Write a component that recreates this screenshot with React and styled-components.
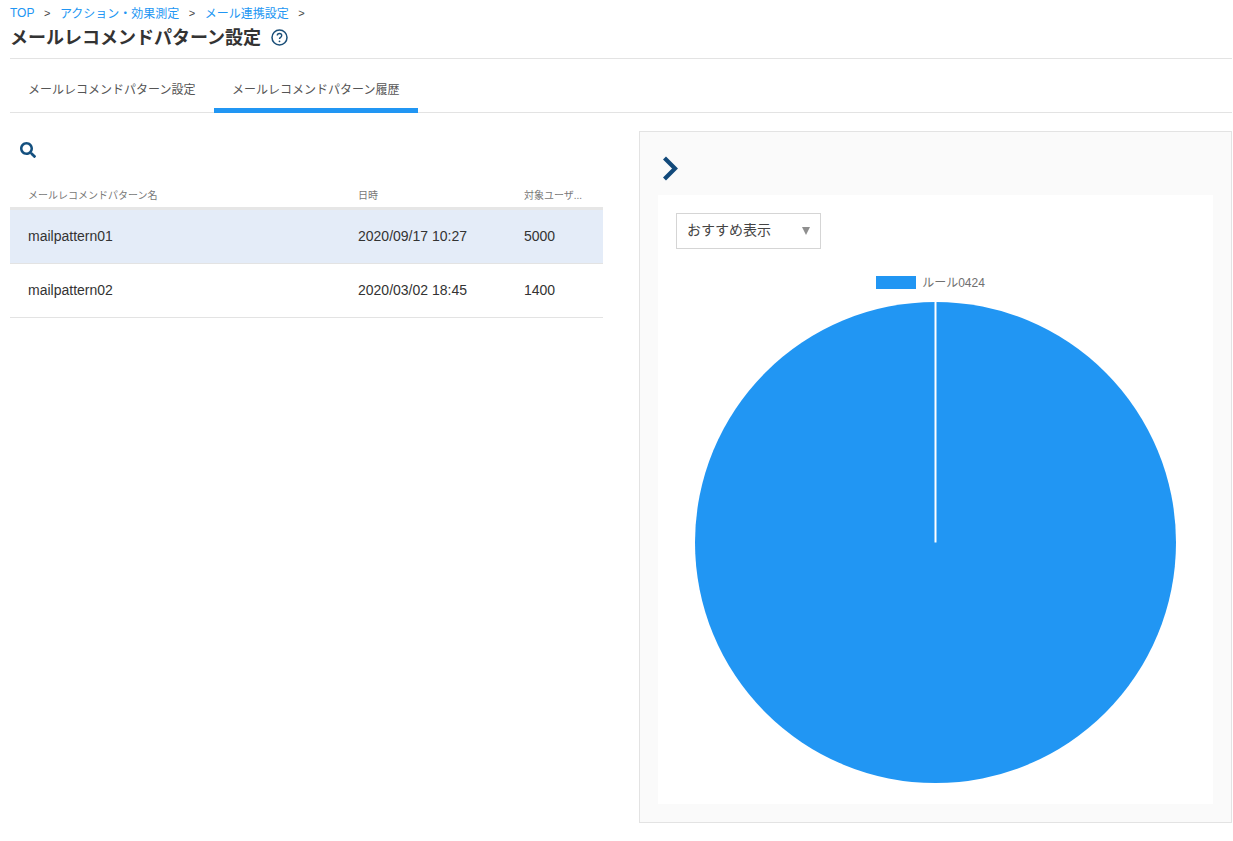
import styled, { createGlobalStyle } from 'styled-components';
import { FaSearch } from 'react-icons/fa';

const rows = [
  { name: 'mailpattern01', date: '2020/09/17 10:27', users: 5000, selected: true },
  { name: 'mailpattern02', date: '2020/03/02 18:45', users: 1400 },
];

const App = () => (
  <>
    <GlobalStyle />
    <Page>
      <Breadcrumb>
        <Crumb>TOP</Crumb>
        <Sep>&gt;</Sep>
        <Crumb>アクション・効果測定</Crumb>
        <Sep>&gt;</Sep>
        <Crumb>メール連携設定</Crumb>
        <Sep>&gt;</Sep>
      </Breadcrumb>
      <TitleRow>
        <Title>メールレコメンドパターン設定</Title>
        <svg width="17" height="17" viewBox="0 0 17 17" fill="none">
          <circle cx="8.5" cy="8.5" r="7.5" stroke="#1b4f78" strokeWidth="1.5" />
          <path d="M6.3 6.6c0-1.3 1-2.1 2.2-2.1s2.2.8 2.2 2c0 1.9-2.2 1.8-2.2 3.6" stroke="#1b4f78" strokeWidth="1.4" />
          <circle cx="8.5" cy="12.3" r="0.9" fill="#1b4f78" />
        </svg>
      </TitleRow>
      <Tabs>
        <Tab>メールレコメンドパターン設定</Tab>
        <Tab $active>メールレコメンドパターン履歴</Tab>
      </Tabs>
      <Content>
        <ListPane>
          <SearchButton>
            <FaSearch size={16} color="#14507f" />
          </SearchButton>
          <HeadRow>
            <NameCell>メールレコメンドパターン名</NameCell>
            <DateCell>日時</DateCell>
            <UsersCell>対象ユーザ...</UsersCell>
          </HeadRow>
          {rows.map((row) => (
            <Row key={row.name} $selected={row.selected}>
              <NameCell>{row.name}</NameCell>
              <DateCell>{row.date}</DateCell>
              <UsersCell>{row.users}</UsersCell>
            </Row>
          ))}
        </ListPane>
        <DetailPane>
          <Collapse>
            <svg width="17" height="25" viewBox="0 0 17 25" fill="none">
              <path d="M2.5 2l10.5 10.5-10.5 10.5" stroke="#12497a" strokeWidth="4.2" />
            </svg>
          </Collapse>
          <ChartCard>
            <Select>
              <SelectLabel>おすすめ表示</SelectLabel>
              <Caret />
            </Select>
            <Legend>
              <Swatch />
              <LegendLabel>ルール0424</LegendLabel>
            </Legend>
            <PieWrap>
              <svg width="481" height="481" viewBox="0 0 481 481">
                <circle cx="240.5" cy="240.5" r="240.5" fill="#2196f3" />
                <line x1="240.5" y1="0" x2="240.5" y2="240.5" stroke="#fff" strokeWidth="2" />
              </svg>
            </PieWrap>
          </ChartCard>
        </DetailPane>
      </Content>
    </Page>
  </>
);

export default App;

const GlobalStyle = createGlobalStyle`
  html, body {
    margin: 0;
    background: #fff;
    font-family: "Liberation Sans", "Noto Sans CJK JP", sans-serif;
    color: #333;
  }
`;

const Page = styled.div`
  width: 1233px;
  height: 841px;
  box-sizing: border-box;
  padding: 5px 1px 0 10px;
  overflow: hidden;
`;

const Breadcrumb = styled.div`
  display: flex;
  align-items: center;
  height: 15px;
  font-size: 12px;
`;

const Crumb = styled.span`
  color: #2196f3;
`;

const Sep = styled.span`
  color: #444;
  font-size: 11px;
  margin: 0 9.5px;
`;

const TitleRow = styled.div`
  display: flex;
  align-items: center;
  gap: 10px;
  height: 34px;
  padding-bottom: 4px;
  border-bottom: 1px solid #e3e3e3;
`;

const Title = styled.h1`
  margin: 0 0 2px;
  font-size: 18px;
  font-weight: 700;
  color: #333;
`;

const Tabs = styled.div`
  display: flex;
  height: 54px;
  box-sizing: border-box;
  border-bottom: 1px solid #e3e3e3;
`;

const Tab = styled.div`
  width: 204px;
  height: 54px;
  box-sizing: border-box;
  padding: 23px 0 0 18px;
  font-size: 12px;
  line-height: 16px;
  white-space: nowrap;
  color: #555;
  border-bottom: 5px solid ${(props) => (props.$active ? '#2196f3' : 'transparent')};
`;

const Content = styled.div`
  display: flex;
  justify-content: space-between;
  padding-top: 18px;
`;

const ListPane = styled.div`
  width: 593px;
`;

const SearchButton = styled.div`
  display: flex;
  align-items: center;
  height: 16px;
  padding: 11px 0 0 10px;
`;

const HeadRow = styled.div`
  display: flex;
  align-items: center;
  height: 40px;
  padding: 12px 0 0 18px;
  box-sizing: border-box;
  margin-top: 12px;
  font-size: 10px;
  color: #777;
  border-bottom: 3px solid #e6e6e6;
`;

const Row = styled.div`
  display: flex;
  align-items: center;
  height: 54px;
  box-sizing: border-box;
  padding: 0 0 2px 18px;
  font-size: 14px;
  color: #333;
  background: ${(props) => (props.$selected ? '#e4ecf8' : '#fff')};
  border-bottom: 1px solid #e3e3e3;
`;

const NameCell = styled.div`
  width: 330px;
`;

const DateCell = styled.div`
  width: 166px;
`;

const UsersCell = styled.div`
  width: 79px;
`;

const DetailPane = styled.div`
  width: 593px;
  height: 692px;
  box-sizing: border-box;
  border: 1px solid #e3e3e3;
  background: #fafafa;
  padding: 0 18px 18px;
  display: flex;
  flex-direction: column;
`;

const Collapse = styled.div`
  display: flex;
  align-items: center;
  height: 63px;
  padding: 10px 0 0 4px;
  box-sizing: border-box;
`;

const ChartCard = styled.div`
  flex: 1;
  background: #fff;
  padding: 18px;
`;

const Select = styled.div`
  width: 145px;
  height: 36px;
  box-sizing: border-box;
  border: 1px solid #d5d5d5;
  display: flex;
  align-items: center;
  justify-content: space-between;
  padding: 0 10px;
  font-size: 14px;
  color: #444;
`;

const SelectLabel = styled.span`
  padding-bottom: 5px;
`;

const Caret = styled.span`
  width: 0;
  height: 0;
  border-left: 4px solid transparent;
  border-right: 4px solid transparent;
  border-top: 8px solid #8f8f8f;
`;

const Legend = styled.div`
  display: flex;
  align-items: center;
  justify-content: center;
  gap: 6px;
  height: 13px;
  margin-top: 27px;
  padding-right: 10px;
`;

const Swatch = styled.span`
  width: 40px;
  height: 13px;
  background: #2196f3;
`;

const LegendLabel = styled.span`
  font-size: 12px;
  color: #707070;
  padding-bottom: 2px;
`;

const PieWrap = styled.div`
  display: flex;
  justify-content: center;
  margin-top: 13px;
`;
